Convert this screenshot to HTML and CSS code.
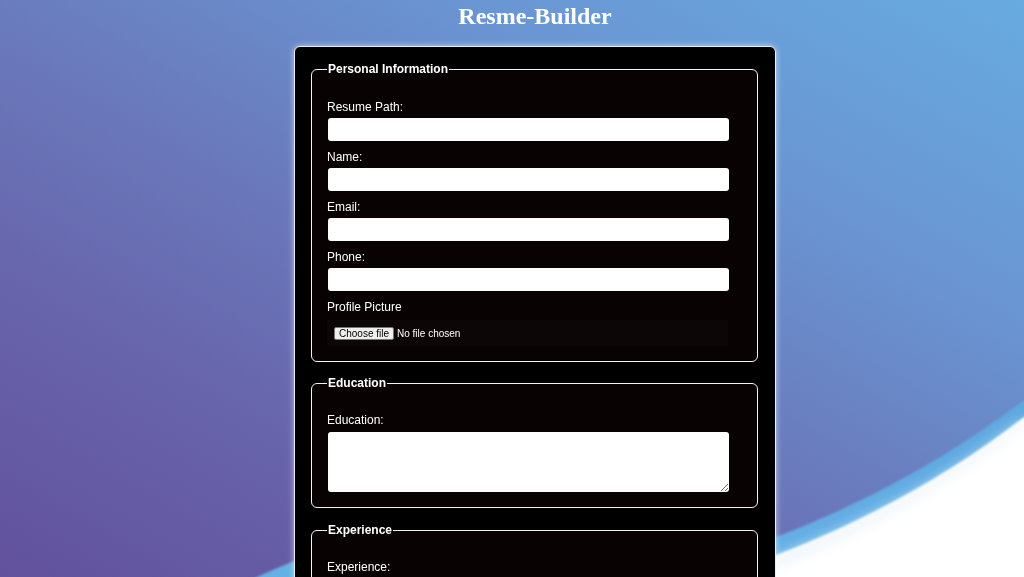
FILE: index.html
```html
<!DOCTYPE html>
<html lang="en">
<head>
<meta charset="utf-8">
<title>Resme-Builder</title>
<link rel="stylesheet" href="styles.css">
</head>
<body>
<div class="backdrop" aria-hidden="true">
  <svg viewBox="0 0 1024 577" preserveAspectRatio="none">
    <defs>
      <filter id="soft" x="-5%" y="-5%" width="110%" height="110%">
        <feGaussianBlur stdDeviation="1.2"/>
      </filter>
      <filter id="haze" x="-10%" y="-10%" width="120%" height="120%">
        <feGaussianBlur stdDeviation="6"/>
      </filter>
      <linearGradient id="band" x1="0" y1="0" x2="0" y2="1">
        <stop offset="0" stop-color="#5fa8e0"/>
        <stop offset="1" stop-color="#66b1e6"/>
      </linearGradient>
    </defs>
    <path filter="url(#soft)" fill="url(#band)" d="M 210 600 C 240 585 270 570 300 559 C 450 545 650 550 776 537 C 876 499 960 449 1024 400 L 1030 400 L 1030 600 Z"/>
    <path filter="url(#soft)" fill="#ffffff" d="M 300 600 C 450 585 650 570 776 555 C 876 517 960 467 1024 417 L 1040 417 L 1040 600 Z"/>
    <path filter="url(#haze)" fill="#e6f1f8" opacity="0.7" d="M 776 556 C 876 518 960 468 1024 418 L 1024 426 C 960 476 876 528 776 568 Z"/>
  </svg>
</div>

<main class="page">
  <h1 class="title">Resme-Builder</h1>

  <form class="card">
    <fieldset class="group group-first">
      <legend>Personal Information</legend>
      <label class="caption" for="path">Resume Path:</label>
      <input type="text" id="path" class="field">
      <label class="caption" for="name">Name:</label>
      <input type="text" id="name" class="field">
      <label class="caption" for="email">Email:</label>
      <input type="email" id="email" class="field">
      <label class="caption" for="phone">Phone:</label>
      <input type="tel" id="phone" class="field">
      <span class="caption">Profile Picture</span>
      <div class="file">
        <label class="file-btn" for="pic">Choose file</label>
        <span class="file-name">No file chosen</span>
        <input type="file" id="pic" class="file-input">
      </div>
    </fieldset>

    <fieldset class="group">
      <legend>Education</legend>
      <label class="caption" for="education">Education:</label>
      <textarea id="education" class="field area"></textarea>
    </fieldset>

    <fieldset class="group">
      <legend>Experience</legend>
      <label class="caption" for="experience">Experience:</label>
      <textarea id="experience" class="field area"></textarea>
    </fieldset>

    <fieldset class="group">
      <legend>Skills</legend>
      <label class="caption" for="skills">Skills:</label>
      <textarea id="skills" class="field area"></textarea>
    </fieldset>

    <button type="submit" class="submit">Generate Resume</button>
  </form>
</main>
</body>
</html>
```

FILE: styles.css
```css
html {
  scrollbar-width: none;
}

html,
body {
  margin: 0;
}

body {
  font-family: "Liberation Sans", Arial, sans-serif;
  color: #ffffff;
  min-height: 100vh;
}

.backdrop {
  position: fixed;
  inset: 0;
  z-index: -1;
  background: linear-gradient(to top right, #62519d 0%, #6866ad 28%, #6a7cbd 50%, #6a95d2 72%, #67abe0 100%);
}

.backdrop svg {
  display: block;
  width: 100%;
  height: 100%;
}

.page {
  display: flex;
  flex-direction: column;
  align-items: center;
  padding-left: 46px;
}

.title {
  margin: 3px 0 16px;
  font: bold 24px/27px "Liberation Serif", "Times New Roman", serif;
  color: #ffffff;
}

.card {
  width: 482px;
  box-sizing: border-box;
  padding: 15px 17px 20px 16px;
  background: #000000;
  border: 1px solid #e8eef8;
  border-radius: 6px;
  box-shadow: 0 0 6px rgba(255, 255, 255, 0.6);
}

.group {
  min-width: 0;
  margin: 0 0 15px;
  padding: 23px 15px 15px;
  background: #080203;
  border: 1px solid #f2f2f2;
  border-radius: 6px;
}

.group-first {
  padding-top: 24px;
  margin-bottom: 14px;
}

.group legend {
  padding: 0 1px;
  font-size: 12px;
  line-height: 14px;
  font-weight: bold;
}

.caption {
  display: block;
  margin-bottom: 4px;
  font-size: 12px;
  line-height: 14px;
}

.field {
  display: block;
  width: 401px;
  height: 23px;
  box-sizing: border-box;
  margin: 0 0 9px 1px;
  padding: 2px 4px;
  background: #ffffff;
  border: none;
  border-radius: 3px;
  font: 12px "Liberation Sans", Arial, sans-serif;
  color: #000000;
}

.area {
  height: 60px;
  margin-top: 5px;
  margin-bottom: 0;
}

.file {
  display: flex;
  align-items: center;
  width: 401px;
  height: 26px;
  box-sizing: border-box;
  margin-top: 6px;
  padding: 1px 6px 0 7px;
  background: #0c0607;
  font: 10px/11px "Liberation Sans", Arial, sans-serif;
  color: #ffffff;
}

.file-btn {
  display: block;
  height: 13px;
  box-sizing: border-box;
  margin-right: 3px;
  padding: 0 4px;
  font: 10px/11px "Liberation Sans", Arial, sans-serif;
  color: #000000;
  background: #efefef;
  border: 1px solid #767676;
  border-radius: 2px;
}

.file-input {
  display: none;
}

.submit {
  display: block;
  padding: 6px 14px;
  font: bold 12px "Liberation Sans", Arial, sans-serif;
  color: #000000;
  background: #ffffff;
  border: none;
  border-radius: 3px;
}
```
